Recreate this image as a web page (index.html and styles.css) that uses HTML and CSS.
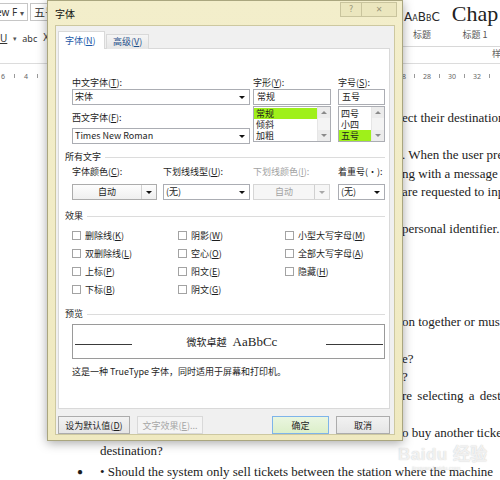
FILE: index.html
```html
<!DOCTYPE html>
<html lang="zh-CN">
<head>
<meta charset="utf-8">
<title>字体</title>
<link rel="stylesheet" href="styles.css">
</head>
<body>
<div class="screen">
  <header class="ribbon">
    <div class="rb-left">
      <div class="rb-row1">
        <span class="fbox fname">ew F <span class="dd">▾</span></span>
        <span class="fbox fsize">五号</span>
      </div>
      <div class="rb-row2">
        <span class="u">U</span><span class="dd2">▾</span><span class="abc">abc</span><span class="xx">X<sub>2</sub></span>
      </div>
    </div>
    <div class="rb-right">
      <div class="gallery">
        <div class="sty"><span class="s-title">AaBbC</span><span class="s-name">标题</span></div>
        <div class="sty"><span class="s-chap">Chap</span><span class="s-name">标题 1</span></div>
      </div>
      <div class="grp">样式</div>
    </div>
  </header>
  <div class="ruler">
    <div class="rl-left"><span>6</span><i></i><span>4</span><i></i></div>
    <div class="rl-right"><span>8</span><i></i><span>28</span><i></i><span>30</span><i></i><span>32</span><i></i></div>
  </div>
  <main class="doc">
    <p class="ln frag">ect their destination</p>
    <p class="ln"></p>
    <p class="ln frag">. When the user pre</p>
    <p class="ln frag">ng with a message</p>
    <p class="ln frag">are requested to inp</p>
    <p class="ln"></p>
    <p class="ln frag">personal identifier.</p>
    <p class="ln"></p>
    <p class="ln"></p>
    <p class="ln"></p>
    <p class="ln"></p>
    <p class="ln frag">on together or must</p>
    <p class="ln"></p>
    <p class="ln frag">e?</p>
    <p class="ln frag">?</p>
    <p class="ln frag spaced">re selecting a destin</p>
    <p class="ln"></p>
    <p class="ln frag">o buy another ticke</p>
    <p class="ln full">destination?</p>
    <p class="ln full bullet"><span class="dot">●</span><span class="btext">• Should the system only sell tickets between the station where the machine</span></p>
  </main>

  <div class="watermark"><span class="wm-logo">Bai<b>du</b> 经验</span><span class="wm-url">jingyan.baidu.com</span></div>

  <div class="dialog">
    <div class="titlebar">
      <span class="title">字体</span>
      <div class="caps">
        <span class="cap">?</span>
        <span class="cap cap-close">✕</span>
      </div>
    </div>
    <div class="client">
      <div class="tabs">
        <span class="tab tab-on">字体(<u>N</u>)</span>
        <span class="tab">高级(<u>V</u>)</span>
      </div>
      <div class="panel">
        <div class="fontrow">
          <div class="col col-name">
            <span class="lbl">中文字体(<u>T</u>):</span>
            <div class="combo"><span class="val">宋体</span><span class="arr"></span></div>
            <span class="lbl lbl2">西文字体(<u>F</u>):</span>
            <div class="combo"><span class="val">Times New Roman</span><span class="arr"></span></div>
          </div>
          <div class="col col-style">
            <span class="lbl">字形(<u>Y</u>):</span>
            <div class="tbox">常规</div>
            <div class="list">
              <div class="items"><span class="it sel">常规</span><span class="it">倾斜</span><span class="it">加粗</span></div>
              <div class="sb"><span class="sb-up"></span><span class="sb-dn"></span></div>
            </div>
          </div>
          <div class="col col-size">
            <span class="lbl">字号(<u>S</u>):</span>
            <div class="tbox">五号</div>
            <div class="list">
              <div class="items"><span class="it">四号</span><span class="it">小四</span><span class="it sel">五号</span></div>
              <div class="sb"><span class="sb-up"></span><span class="sb-dn"></span></div>
            </div>
          </div>
        </div>

        <div class="sect">所有文字</div>
        <div class="allrow">
          <div class="col c-color">
            <span class="lbl">字体颜色(<u>C</u>):</span>
            <div class="colorbtn"><span class="val">自动</span><span class="arr"></span></div>
          </div>
          <div class="col c-uline">
            <span class="lbl">下划线线型(<u>U</u>):</span>
            <div class="combo"><span class="val">(无)</span><span class="arr"></span></div>
          </div>
          <div class="col c-ucolor dis">
            <span class="lbl">下划线颜色(<u>I</u>):</span>
            <div class="colorbtn"><span class="val">自动</span><span class="arr"></span></div>
          </div>
          <div class="col c-emph">
            <span class="lbl">着重号(·):</span>
            <div class="combo"><span class="val">(无)</span><span class="arr"></span></div>
          </div>
        </div>

        <div class="sect">效果</div>
        <div class="effects">
          <label class="chk"><span class="cb"></span>删除线(<u>K</u>)</label>
          <label class="chk"><span class="cb"></span>双删除线(<u>L</u>)</label>
          <label class="chk"><span class="cb"></span>上标(<u>P</u>)</label>
          <label class="chk"><span class="cb"></span>下标(<u>B</u>)</label>
          <label class="chk"><span class="cb"></span>阴影(<u>W</u>)</label>
          <label class="chk"><span class="cb"></span>空心(<u>O</u>)</label>
          <label class="chk"><span class="cb"></span>阳文(<u>E</u>)</label>
          <label class="chk"><span class="cb"></span>阴文(<u>G</u>)</label>
          <label class="chk"><span class="cb"></span>小型大写字母(<u>M</u>)</label>
          <label class="chk"><span class="cb"></span>全部大写字母(<u>A</u>)</label>
          <label class="chk"><span class="cb"></span>隐藏(<u>H</u>)</label>
        </div>

        <div class="sect">预览</div>
        <div class="preview">
          <span class="pline"></span>
          <span class="ptext"><span class="pcn">微软卓越</span><span class="pen">AaBbCc</span></span>
          <span class="pline"></span>
        </div>
        <p class="caption">这是一种 TrueType 字体，同时适用于屏幕和打印机。</p>
      </div>
      <div class="btns">
        <button class="btn b-def">设为默认值(<u>D</u>)</button>
        <button class="btn b-fx" disabled>文字效果(<u>E</u>)...</button>
        <span class="spacer"></span>
        <button class="btn b-ok">确定</button>
        <button class="btn b-cancel">取消</button>
      </div>
    </div>
  </div>
</div>
</body>
</html>
```

FILE: styles.css
```css
* { box-sizing: border-box; margin: 0; padding: 0; }
html, body { width: 500px; height: 480px; overflow: hidden; background: #fff; }
body {
  font-family: "Noto Sans CJK SC", "Noto Sans", sans-serif;
  font-size: 9px;
  color: #1e1e1e;
}
.screen { position: relative; width: 500px; height: 480px; overflow: hidden; }

/* ---------- Word ribbon ---------- */
.ribbon {
  height: 64px;
  display: flex;
  justify-content: space-between;
  border-bottom: 1px solid #dcdcdc;
}
.rb-left { width: 60px; padding-top: 3px; }
.rb-row1 { display: flex; gap: 2px; margin-left: -8px; }
.fbox {
  height: 18px;
  border: 1px solid #c6c6c6;
  display: flex;
  align-items: center;
  padding: 0 3px;
  font-size: 11px;
  color: #333;
  white-space: nowrap;
}
.fname { width: 36px; font-family: "Noto Sans", sans-serif; font-size: 10px; }
.dd { font-size: 8px; margin-left: 3px; color: #555; }
.fsize { width: 30px; font-size: 11px; }
.rb-row2 {
  display: flex;
  align-items: center;
  height: 16px;
  margin-top: 9px;
  font-family: "Noto Sans", sans-serif;
  font-size: 10px;
  color: #333;
}
.u { text-decoration: underline; margin-right: 6px; }
.dd2 { font-size: 7px; color: #555; margin-right: 5px; }
.abc { font-size: 9px; margin-right: 6px; }
.xx { font-size: 10px; }
.xx sub { font-size: 6px; }

.rb-right { width: 103px; display: flex; flex-direction: column; }
.gallery { display: flex; gap: 3px; height: 47px; border-bottom: 1px solid #d8d8d8; }
.sty { width: 50px; display: flex; flex-direction: column; align-items: center; }
.s-title {
  height: 28px; line-height: 34px;
  font-family: "DejaVu Sans", sans-serif;
  font-variant: small-caps;
  font-size: 12px;
  color: #2a2a2a;
}
.s-chap {
  height: 28px; line-height: 28px;
  font-family: "Liberation Serif", serif;
  font-size: 22px;
  color: #222;
}
.s-name { font-size: 9px; color: #555; line-height: 12px; margin-top: 1px; }
.grp { font-size: 9px; color: #666; padding-left: 95px; line-height: 14px; white-space: nowrap; }

/* ruler */
.ruler {
  height: 18px;
  margin-top: 3px;
  display: flex;
  justify-content: space-between;
  align-items: center;
  font-family: "Noto Sans", sans-serif;
  font-size: 7px;
  color: #666;
}
.rl-left, .rl-right { display: flex; align-items: center; }
.rl-left { gap: 9px; padding-left: 1px; }
.rl-right { gap: 8px; padding-right: 10px; }
.ruler i { display: block; width: 1px; height: 4px; background: #9a9a9a; }

/* ---------- document ---------- */
.doc {
  padding-top: 24px;
  font-family: "Liberation Serif", serif;
  font-size: 13px;
  color: #1c1c1c;
}
.ln { height: 18.5px; line-height: 18.5px; white-space: nowrap; }
.frag { padding-left: 402px; }
.spaced { word-spacing: 2px; }
.full { padding-left: 100px; }
.bullet { display: flex; padding-left: 77px; margin-top: 2px; }
.dot { width: 23px; font-size: 10px; }
.btext { word-spacing: 0; }

.watermark {
  position: absolute;
  left: 398px;
  top: 440px;
  display: flex;
  flex-direction: column;
  color: rgba(255,255,255,0.75);
  text-shadow: 0 0 1px rgba(120,120,120,0.45);
}
.wm-logo { font-family: "Liberation Sans", sans-serif; font-size: 17px; font-weight: bold; letter-spacing: 0.5px; }
.wm-logo b { color: rgba(255,255,255,0.75); }
.wm-url { font-family: "Liberation Sans", sans-serif; font-size: 6px; margin-left: 14px; }

/* ---------- dialog ---------- */
.dialog {
  position: absolute;
  left: 47px;
  top: 0;
  width: 356px;
  height: 441px;
  background: linear-gradient(#f3eecb, #efe9c0);
  border: 1px solid #aaa67f;
  box-shadow: 0 2px 10px rgba(0,0,0,0.35);
  padding: 0 7px 5px 7px;
  display: flex;
  flex-direction: column;
}
.titlebar {
  height: 24px;
  display: flex;
  justify-content: space-between;
  align-items: flex-start;
}
.title { font-size: 10px; line-height: 10px; color: #111; margin-top: 8px; }
.caps { display: flex; margin-top: 1px; margin-right: -2px; }
.cap {
  width: 22px;
  height: 15px;
  border: 1px solid #c9c49d;
  background: #ebe6be;
  color: #9a967a;
  font-size: 8px;
  display: flex;
  align-items: center;
  justify-content: center;
  font-family: "DejaVu Sans", sans-serif;
}
.cap-close { width: 35px; border-left: none; }

.client {
  flex: 1;
  background: #f0f0f0;
  border: 1px solid #cdc8a0;
  padding: 5px 4px 0 2px;
  display: flex;
  flex-direction: column;
}
.tabs { display: flex; align-items: flex-end; height: 18px; margin-bottom: -1px; position: relative; z-index: 1; }
.tab {
  height: 15px;
  padding: 0 6px;
  border: 1px solid #d9d9d9;
  border-bottom: none;
  background: linear-gradient(#f5f5f5, #e6e6e6);
  color: #1e4f8a;
  line-height: 13px;
  font-size: 9px;
  margin-left: 1px;
}
.tab-on {
  height: 18px;
  width: 47px;
  background: #fff;
  line-height: 17px;
  padding: 0 0 0 6px;
  margin-left: 0;
  color: #1d59a8;
}
.panel {
  height: 361px;
  background: #fff;
  border: 1px solid #d9d9d9;
  padding: 28px 4px 0 13px;
}
.lbl { display: block; height: 12px; line-height: 12px; white-space: nowrap; }
.fontrow { display: flex; align-items: flex-start; }
.col { display: flex; flex-direction: column; }
.col-name { width: 178px; }
.col-style { width: 78px; margin-left: 3px; }
.col-size { width: 47px; margin-left: 7px; }
.lbl2 { margin-top: 7px; margin-bottom: 4px; }

.combo, .colorbtn {
  height: 16px;
  border: 1px solid #abadb3;
  background: #fff;
  display: flex;
  align-items: center;
}
.val { flex: 1; padding-left: 2px; line-height: 14px; white-space: nowrap; overflow: hidden; }
.arr { width: 15px; height: 14px; display: flex; align-items: center; justify-content: center; }
.arr::after {
  content: "";
  border-left: 3px solid transparent;
  border-right: 3px solid transparent;
  border-top: 3px solid #111;
}
.tbox {
  height: 16px;
  border: 1px solid #abadb3;
  padding-left: 3px;
  line-height: 14px;
}
.list {
  height: 36px;
  margin-top: 1px;
  border: 1px solid #abadb3;
  display: flex;
  overflow: hidden;
}
.items { flex: 1; display: flex; flex-direction: column; padding-top: 1px; }
.it { height: 11px; line-height: 11px; padding-left: 2px; overflow: hidden; }
.sel { background: #9ff01a; }
.sb {
  width: 13px;
  background: #f4f4f4;
  border-left: 1px solid #e6e6e6;
  display: flex;
  flex-direction: column;
  justify-content: space-between;
}
.sb-up, .sb-dn { height: 11px; display: flex; align-items: center; justify-content: center; background: #ececec; }
.sb-up::after {
  content: "";
  border-left: 3px solid transparent;
  border-right: 3px solid transparent;
  border-bottom: 3px solid #8a8a8a;
}
.sb-dn::after {
  content: "";
  border-left: 3px solid transparent;
  border-right: 3px solid transparent;
  border-top: 3px solid #8a8a8a;
}

.sect {
  display: flex;
  align-items: center;
  gap: 4px;
  margin-left: -7px;
  height: 12px;
  line-height: 12px;
  margin-top: 7px;
  white-space: nowrap;
}
.sect::after { content: ""; flex: 1; height: 1px; background: #dcdcdc; }

.allrow { display: flex; margin-top: 3px; }
.allrow .lbl { margin-bottom: 6px; }
.c-color { width: 85px; }
.c-uline { width: 87px; margin-left: 6px; }
.c-ucolor { width: 77px; margin-left: 3px; }
.c-emph { width: 47px; margin-left: 8px; }
.colorbtn { background: linear-gradient(#fdfdfd, #efefef); border-color: #acacac; }
.colorbtn .val { text-align: center; padding-left: 0; }
.colorbtn .arr { border-left: 1px solid #d0d0d0; height: 14px; }
.dis .lbl, .dis .val { color: #a2a2a2; }
.dis .colorbtn { border-color: #d6d6d6; background: #f6f6f6; }
.dis .arr::after { border-top-color: #a8a8a8; }

.sect + .effects { margin-top: 4px; }
.allrow + .sect, .effects + .sect { margin-top: 10px; }
.effects {
  display: grid;
  grid-auto-flow: column;
  grid-template-rows: repeat(4, 18px);
  grid-template-columns: 106px 107px 1fr;
}
.chk { display: flex; align-items: center; white-space: nowrap; }
.cb { width: 9px; height: 9px; border: 1px solid #a3a3a3; background: #fff; margin-right: 4px; }

.preview {
  margin-top: 4px;
  height: 35px;
  border: 1px solid #9a9a9a;
  display: flex;
  align-items: center;
  justify-content: space-between;
  padding: 0 1px 0 2px;
}
.pline { width: 57px; height: 1px; background: #3a3a3a; margin-top: 6px; }
.ptext { display: flex; align-items: baseline; gap: 6px; margin-left: 6px; }
.pcn { font-size: 10px; }
.pen { font-family: "Liberation Serif", serif; font-size: 13px; }
.caption { margin-top: 7px; height: 12px; line-height: 12px; white-space: nowrap; }

.btns { display: flex; margin-top: 7px; gap: 7px; }
.spacer { flex: 1; }
.btn {
  height: 18px;
  border: 1px solid #acacac;
  background: linear-gradient(#f2f2f2, #e5e5e5);
  font-family: "Noto Sans CJK SC", "Noto Sans", sans-serif;
  font-size: 9px;
  color: #1e1e1e;
  padding: 0;
}
.b-def { width: 72px; }
.b-fx { width: 66px; color: #a6a6a6; background: #f4f4f4; border-color: #d9d9d9; }
.b-ok { width: 57px; border-color: #7eb4ea; background: linear-gradient(#eaf6e0, #dcefc9); }
.b-cancel { width: 54px; }
```
